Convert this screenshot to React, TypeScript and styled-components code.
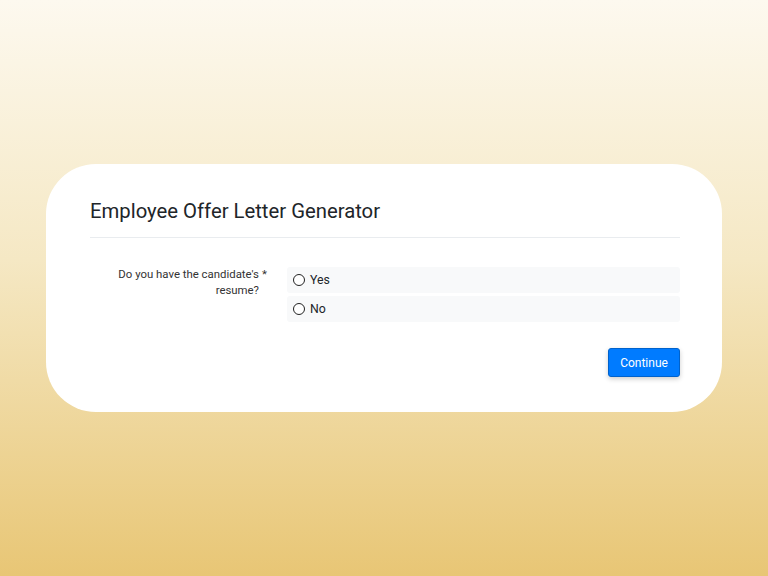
import styled, { createGlobalStyle } from 'styled-components';

const GlobalStyle = createGlobalStyle`
    html, body {
        margin: 0;
        padding: 0;
    }
    body {
        font-family: Roboto, "Liberation Sans", sans-serif;
        color: #212529;
    }
    * {
        box-sizing: border-box;
    }
`;

const options = ['Yes', 'No'];

const App = () => {
    return (
        <>
            <GlobalStyle />
            <Page>
                <Card>
                    <Title>Employee Offer Letter Generator</Title>
                    <FormRow>
                        <Label>
                            Do you have the candidate's resume?
                            <Required>*</Required>
                        </Label>
                        <OptionList>
                            {options.map((option) => (
                                <Option key={option}>
                                    <Radio type='radio' name='resume' />
                                    {option}
                                </Option>
                            ))}
                        </OptionList>
                    </FormRow>
                    <Actions>
                        <ContinueButton>Continue</ContinueButton>
                    </Actions>
                </Card>
            </Page>
        </>
    );
};

const Page = styled.div`
    width: 768px;
    height: 576px;
    display: flex;
    align-items: center;
    justify-content: center;
    background: linear-gradient(to bottom, #fdf9ef 0%, #f5e8c4 45%, #e8c675 100%);
`;

const Card = styled.div`
    width: 676px;
    height: 248px;
    padding: 35px 42px 0 44px;
    background-color: white;
    border-radius: 50px;
`;

const Title = styled.h1`
    margin: 0;
    padding-bottom: 14px;
    font-size: 20.3px;
    line-height: 24px;
    font-weight: 400;
    color: #212529;
    border-bottom: 1px solid #e9ecef;
`;

const FormRow = styled.div`
    display: flex;
    margin-top: 29px;
`;

const Label = styled.label`
    position: relative;
    width: 197px;
    flex-shrink: 0;
    padding: 0 28px 0 24px;
    margin-top: -1px;
    text-align: right;
    font-size: 11.4px;
    line-height: 16px;
    color: #333;
`;

const Required = styled.span`
    position: absolute;
    right: 20px;
    top: 0;
`;

const OptionList = styled.div`
    flex: 1;
    display: flex;
    flex-direction: column;
    gap: 3px;
`;

const Option = styled.label`
    display: flex;
    align-items: center;
    height: 26px;
    padding: 0 6px;
    background-color: #f8f9fa;
    border-radius: 3px;
    font-size: 12.3px;
    color: #212529;
`;

const Radio = styled.input`
    appearance: none;
    width: 12px;
    height: 12px;
    margin: 0 5px 0 0;
    border: 1.5px solid #222;
    border-radius: 50%;
    background: white;
`;

const Actions = styled.div`
    display: flex;
    justify-content: flex-end;
    margin-top: 26px;
`;

const ContinueButton = styled.button`
    width: 72px;
    height: 29px;
    padding: 0;
    font-family: Roboto, "Liberation Sans", sans-serif;
    font-size: 12px;
    color: white;
    background-color: #007bff;
    border: 1px solid #0062cc;
    border-radius: 3px;
    box-shadow: 0 2px 5px rgba(0, 0, 0, 0.2);
`;

export default App;
